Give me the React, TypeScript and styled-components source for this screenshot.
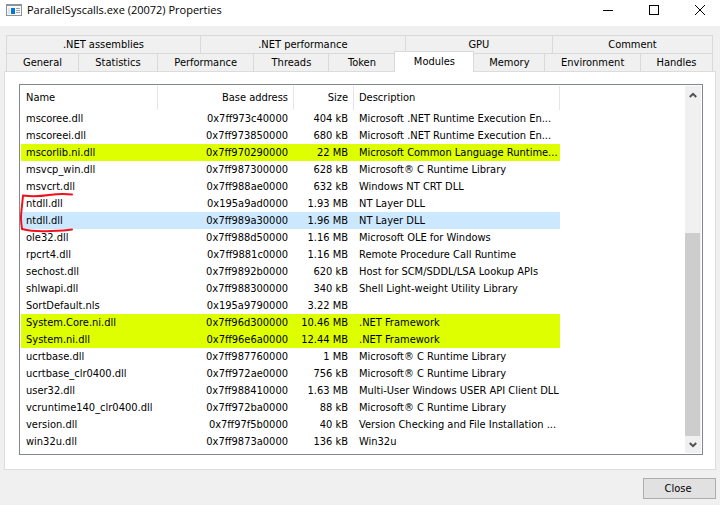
import React from "react";
import styled, { createGlobalStyle, css } from "styled-components";

const GlobalStyle = createGlobalStyle`
  *, *::before, *::after { box-sizing: border-box; }
  body {
    margin: 0;
    background: #f0f0f0;
    color: #000;
    font-family: "DejaVu Sans Condensed", "Noto Sans", sans-serif;
    font-size: 11px;
    line-height: 16px;
  }
  button { font: inherit; color: inherit; }
`;

const Window = styled.div`
  display: flex;
  flex-direction: column;
  min-height: 100vh;
`;

const TitleBar = styled.header`
  display: flex;
  align-items: center;
  height: 26px;
  padding: 0 2px 6px 6px;
  background: #fff;
`;

const Title = styled.h1`
  flex: 1;
  margin: 0 0 0 5px;
  font: 400 11px/16px "Open Sans", sans-serif;
  white-space: nowrap;
`;

const CaptionButtons = styled.div`
  display: flex;
  gap: 10px;
`;

const CaptionButton = styled.button`
  display: flex;
  align-items: center;
  justify-content: center;
  width: 36px;
  height: 20px;
  padding: 0;
  border: 0;
  background: transparent;
`;

const Content = styled.main`
  flex: 1;
  display: flex;
  flex-direction: column;
  padding: 9px 4px 6px;
`;

const TabRow = styled.div`
  display: flex;
  align-items: flex-end;
  height: 18px;
  margin: 0 3px 0 2px;
  border-left: 1px solid #d9d9d9;
`;

const Tab = styled.button<{ $grow: number; $selected?: boolean }>`
  flex: ${(p) => p.$grow} 1 0;
  min-width: 0;
  height: 18px;
  padding: 1px 0 0;
  border: 0 solid #d9d9d9;
  border-width: 1px 1px 0 0;
  background: #f0f0f0;
  text-align: center;
  white-space: nowrap;
  ${(p) =>
    p.$selected &&
    css`
      z-index: 1;
      height: 21px;
      margin: 0 0 -1px -1px;
      padding-bottom: 2px;
      border-left-width: 1px;
      background: #fff;
    `}
`;

const Panel = styled.section`
  flex: 1;
  display: flex;
  padding: 12px 12px 14px 14px;
  border: 1px solid #dcdcdc;
  background: #fff;
`;

const ListBox = styled.div`
  flex: 1;
  display: flex;
  justify-content: space-between;
  min-width: 0;
  padding: 1px;
  border: 1px solid #828790;
`;

const ModuleTable = styled.table`
  table-layout: fixed;
  width: 539px;
  height: max-content;
  border-collapse: separate;
  border-spacing: 0;
`;

const HeaderCell = styled.th<{ $width: number; $right?: boolean }>`
  width: ${(p) => p.$width}px;
  height: 24px;
  padding: 0 5px;
  border-right: 1px solid #e5e5e5;
  font-weight: 400;
  text-align: ${(p) => (p.$right ? "right" : "left")};
`;

const rowColors = { plain: "#fff", dotnet: "#deff00", selected: "#cce8ff" };
type Tone = keyof typeof rowColors;

const Row = styled.tr<{ $tone: Tone }>`
  height: 17px;
  background: ${(p) => rowColors[p.$tone]};
`;

const Cell = styled.td<{ $right?: boolean }>`
  height: 17px;
  padding: 1px 6px 0 5px;
  text-align: ${(p) => (p.$right ? "right" : "left")};
  white-space: nowrap;
`;

const NameCell = styled(Cell)`
  position: relative;
`;

const Annotation = styled.svg`
  position: absolute;
  left: -2px;
  top: -4px;
  pointer-events: none;
`;

const ScrollBar = styled.div`
  display: flex;
  flex-direction: column;
  width: 16px;
  background: #f0f0f0;
`;

const ScrollButton = styled.button`
  display: flex;
  align-items: center;
  justify-content: center;
  height: 17px;
  padding: 0;
  border: 0;
  background: #f0f0f0;
`;

const ScrollTrack = styled.div`
  flex: 1;
  display: flex;
  flex-direction: column;
  justify-content: flex-end;
`;

const ScrollThumb = styled.div`
  height: 61%;
  margin-right: 1px;
  background: #cdcdcd;
`;

const Footer = styled.footer`
  display: flex;
  justify-content: flex-end;
  padding-top: 8px;
`;

const CloseButton = styled.button`
  width: 73px;
  height: 21px;
  padding: 1px 3px 0 0;
  border: 1px solid #adadad;
  background: #e1e1e1;
`;

type TabInfo = { label: string; grow: number; selected?: boolean };

const upperTabs: TabInfo[] = [
  { label: ".NET assemblies", grow: 194 },
  { label: ".NET performance", grow: 205 },
  { label: "GPU", grow: 147 },
  { label: "Comment", grow: 160 },
];

const lowerTabs: TabInfo[] = [
  { label: "General", grow: 72 },
  { label: "Statistics", grow: 79 },
  { label: "Performance", grow: 97 },
  { label: "Threads", grow: 75 },
  { label: "Token", grow: 66 },
  { label: "Modules", grow: 79, selected: true },
  { label: "Memory", grow: 71 },
  { label: "Environment", grow: 96 },
  { label: "Handles", grow: 72 },
];

type ModuleInfo = {
  name: string;
  base: string;
  size: string;
  description: string;
  tone?: Tone;
  marked?: boolean;
};

const modules: ModuleInfo[] = [
  { name: "mscoree.dll", base: "0x7ff973c40000", size: "404 kB", description: "Microsoft .NET Runtime Execution En..." },
  { name: "mscoreei.dll", base: "0x7ff973850000", size: "680 kB", description: "Microsoft .NET Runtime Execution En..." },
  { name: "mscorlib.ni.dll", base: "0x7ff970290000", size: "22 MB", description: "Microsoft Common Language Runtime...", tone: "dotnet" },
  { name: "msvcp_win.dll", base: "0x7ff987300000", size: "628 kB", description: "Microsoft® C Runtime Library" },
  { name: "msvcrt.dll", base: "0x7ff988ae0000", size: "632 kB", description: "Windows NT CRT DLL" },
  { name: "ntdll.dll", base: "0x195a9ad0000", size: "1.93 MB", description: "NT Layer DLL", marked: true },
  { name: "ntdll.dll", base: "0x7ff989a30000", size: "1.96 MB", description: "NT Layer DLL", tone: "selected" },
  { name: "ole32.dll", base: "0x7ff988d50000", size: "1.16 MB", description: "Microsoft OLE for Windows" },
  { name: "rpcrt4.dll", base: "0x7ff9881c0000", size: "1.16 MB", description: "Remote Procedure Call Runtime" },
  { name: "sechost.dll", base: "0x7ff9892b0000", size: "620 kB", description: "Host for SCM/SDDL/LSA Lookup APIs" },
  { name: "shlwapi.dll", base: "0x7ff988300000", size: "340 kB", description: "Shell Light-weight Utility Library" },
  { name: "SortDefault.nls", base: "0x195a9790000", size: "3.22 MB", description: "" },
  { name: "System.Core.ni.dll", base: "0x7ff96d300000", size: "10.46 MB", description: ".NET Framework", tone: "dotnet" },
  { name: "System.ni.dll", base: "0x7ff96e6a0000", size: "12.44 MB", description: ".NET Framework", tone: "dotnet" },
  { name: "ucrtbase.dll", base: "0x7ff987760000", size: "1 MB", description: "Microsoft® C Runtime Library" },
  { name: "ucrtbase_clr0400.dll", base: "0x7ff972ae0000", size: "756 kB", description: "Microsoft® C Runtime Library" },
  { name: "user32.dll", base: "0x7ff988410000", size: "1.63 MB", description: "Multi-User Windows USER API Client DLL" },
  { name: "vcruntime140_clr0400.dll", base: "0x7ff972ba0000", size: "88 kB", description: "Microsoft® C Runtime Library" },
  { name: "version.dll", base: "0x7ff97f5b0000", size: "40 kB", description: "Version Checking and File Installation ..." },
  { name: "win32u.dll", base: "0x7ff9873a0000", size: "136 kB", description: "Win32u" },
];

const AppIcon = () => (
  <svg width="16" height="12" viewBox="0 0 16 12" shapeRendering="crispEdges" aria-hidden="true">
    <rect width="16" height="12" fill="#8c9499" />
    <rect x="1" y="2" width="14" height="9" fill="#f7f7f7" />
    <rect x="5" y="4" width="4" height="6" fill="#0078d7" />
    <rect x="2" y="4" width="2" height="6" fill="#e3e3e3" />
    <path d="M10 4.500h4M10 6.500h4M10 8.500h4" stroke="#a0a0a0" />
  </svg>
);

const Tabs = ({ tabs }: { tabs: TabInfo[] }) => (
  <TabRow>
    {tabs.map((t) => (
      <Tab key={t.label} type="button" role="tab" aria-selected={!!t.selected} $grow={t.grow} $selected={t.selected}>
        {t.label}
      </Tab>
    ))}
  </TabRow>
);

const RedBracket = () => (
  <Annotation width="56" height="42" viewBox="0 0 56 42" fill="none" aria-hidden="true">
    <path
      d="M53 3.500C46 2.800 38 3 30 4C20 5.500 12 5.500 4 4.500C3.500 12 2 20 2 27C2 31 2.500 35 3 38C10 39.800 22 40.500 32 40C40 39.800 47 39.500 53 38.500"
      stroke="#f2101c"
      strokeWidth="2"
      strokeLinecap="round"
      strokeLinejoin="round"
    />
  </Annotation>
);

export default function App() {
  return (
    <>
      <GlobalStyle />
      <Window>
        <TitleBar>
          <AppIcon />
          <Title>ParallelSyscalls.exe (20072) Properties</Title>
          <CaptionButtons>
            <CaptionButton type="button" aria-label="Minimize">
              <svg width="10" height="10" viewBox="0 0 10 10" shapeRendering="crispEdges">
                <path d="M0 5.500h10" stroke="#000" />
              </svg>
            </CaptionButton>
            <CaptionButton type="button" aria-label="Maximize">
              <svg width="10" height="10" viewBox="0 0 10 10" shapeRendering="crispEdges">
                <path d="M.5.5h9v9h-9z" fill="none" stroke="#000" />
              </svg>
            </CaptionButton>
            <CaptionButton type="button" aria-label="Close window">
              <svg width="10" height="10" viewBox="0 0 10 10">
                <path d="M0 0l10 10M10 0L0 10" stroke="#000" />
              </svg>
            </CaptionButton>
          </CaptionButtons>
        </TitleBar>
        <Content>
          <div role="tablist">
            <Tabs tabs={upperTabs} />
            <Tabs tabs={lowerTabs} />
          </div>
          <Panel>
            <ListBox>
              <ModuleTable>
                <thead>
                  <tr>
                    <HeaderCell $width={137}>Name</HeaderCell>
                    <HeaderCell $width={136} $right>Base address</HeaderCell>
                    <HeaderCell $width={60} $right>Size</HeaderCell>
                    <HeaderCell $width={206}>Description</HeaderCell>
                  </tr>
                </thead>
                <tbody>
                  {modules.map((m) => (
                    <Row key={m.base} $tone={m.tone ?? "plain"}>
                      <NameCell>
                        {m.name}
                        {m.marked && <RedBracket />}
                      </NameCell>
                      <Cell $right>{m.base}</Cell>
                      <Cell $right>{m.size}</Cell>
                      <Cell>{m.description}</Cell>
                    </Row>
                  ))}
                </tbody>
              </ModuleTable>
              <ScrollBar>
                <ScrollButton type="button" aria-label="Scroll up">
                  <svg width="8" height="6" viewBox="0 0 8 6">
                    <path d="M.8 5L4 1.800L7.200 5" fill="none" stroke="#505050" strokeWidth="2" />
                  </svg>
                </ScrollButton>
                <ScrollTrack>
                  <ScrollThumb />
                </ScrollTrack>
                <ScrollButton type="button" aria-label="Scroll down">
                  <svg width="8" height="6" viewBox="0 0 8 6">
                    <path d="M.8 1L4 4.200L7.200 1" fill="none" stroke="#505050" strokeWidth="2" />
                  </svg>
                </ScrollButton>
              </ScrollBar>
            </ListBox>
          </Panel>
          <Footer>
            <CloseButton type="button">Close</CloseButton>
          </Footer>
        </Content>
      </Window>
    </>
  );
}
